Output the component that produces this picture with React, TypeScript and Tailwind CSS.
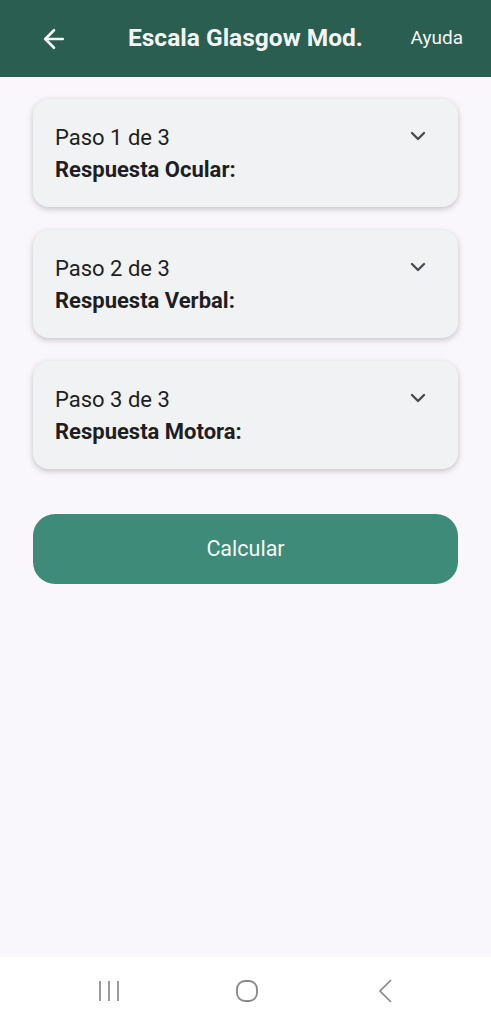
import { ArrowLeft, ChevronDown } from "lucide-react"

const steps = [
  { paso: "Paso 1 de 3", label: "Respuesta Ocular:" },
  { paso: "Paso 2 de 3", label: "Respuesta Verbal:" },
  { paso: "Paso 3 de 3", label: "Respuesta Motora:" },
]

export default function App() {
  return (
    <div
      className="w-[491px] h-[1024px] flex flex-col bg-[#faf7fc] overflow-hidden"
      style={{ fontFamily: "Roboto, 'Noto Sans', sans-serif" }}
    >
      {/* HEADER */}
      <div className="h-[77px] shrink-0 bg-[#2a5e51] flex items-center pl-[39px] pr-[28px] text-[#f2f5f4]">
        <ArrowLeft size={30} strokeWidth={2.1} />
        <h1 className="ml-[59px] text-[24.5px] font-bold">Escala Glasgow Mod.</h1>
        <span className="ml-auto text-[19px]">Ayuda</span>
      </div>

      {/* CONTENT */}
      <div className="flex-1 px-[33px] pt-[22px] flex flex-col">
        <div className="flex flex-col gap-[23px]">
          {steps.map(s => (
            <div
              key={s.paso}
              className="h-[108px] bg-[#f1f2f4] rounded-[16px] shadow-[0_2px_6px_rgba(0,0,0,0.22)] flex justify-between pl-[22px] pr-[28px] pt-[22px]"
            >
              <div className="text-[#1e1e22] leading-[33px]">
                <p className="text-[22px]">{s.paso}</p>
                <p className="text-[22px] font-bold -mt-[1px]">{s.label}</p>
              </div>
              <ChevronDown size={24} strokeWidth={2.4} className="text-[#4a4a50] mt-[3px]" />
            </div>
          ))}
        </div>

        <button className="mt-[45px] h-[70px] rounded-[22px] bg-[#3e8b7a] text-[#f4f8f7] text-[21.5px]">
          Calcular
        </button>
      </div>

      {/* NAV BAR */}
      <div className="h-[67px] shrink-0 bg-white flex items-center pl-[97px] gap-[114px] text-[#8a8a8a]">
        <svg width="24" height="24" viewBox="0 0 24 24" fill="none" stroke="currentColor" strokeWidth="1.7">
          <path d="M3 2v20M12 2v20M21 2v20" />
        </svg>
        <svg width="24" height="24" viewBox="0 0 24 24" fill="none" stroke="currentColor" strokeWidth="1.9">
          <rect x="2" y="2" width="20" height="20" rx="8" />
        </svg>
        <svg width="24" height="24" viewBox="0 0 24 24" fill="none" stroke="currentColor" strokeWidth="1.7">
          <path d="M18 1 7 12l11 11" />
        </svg>
      </div>
    </div>
  )
}
